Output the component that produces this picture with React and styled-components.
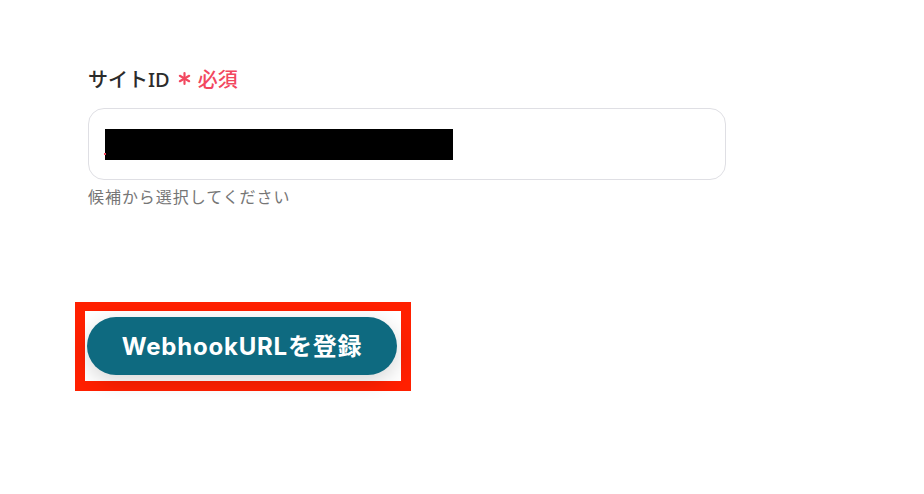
import React from 'react'
import styled, { createGlobalStyle } from 'styled-components'

const GlobalStyle = createGlobalStyle`
  body {
    margin: 0;
    background: #fff;
    font-family: 'Noto Sans', 'Noto Sans CJK JP', sans-serif;
  }
`

const Page = styled.div`
  padding: 62px 0 0 88px;
  height: 494px;
  box-sizing: border-box;
`

const Label = styled.div`
  display: flex;
  align-items: center;
  height: 32px;
  font-size: 20px;
  font-weight: 500;
  color: #2b2b2b;
`

const Required = styled.span`
  display: flex;
  align-items: center;
  gap: 7px;
  margin-left: 8px;
  color: #f2485f;
  font-size: 20px;
  font-weight: 500;
`

const Star = () => (
  <svg width='13' height='13' viewBox='0 0 12 12'>
    <g stroke='#f2485f' strokeWidth='2' strokeLinecap='round'>
      <line x1='6' y1='1' x2='6' y2='11' />
      <line x1='1.7' y1='3.5' x2='10.3' y2='8.5' />
      <line x1='1.7' y1='8.5' x2='10.3' y2='3.5' />
    </g>
  </svg>
)

const Field = styled.div`
  margin-top: 14px;
  width: 638px;
  height: 72px;
  box-sizing: border-box;
  border: 1px solid #dfdfe4;
  border-radius: 16px;
  padding: 20px 0 0 16px;
  position: relative;
`

const Masked = styled.div`
  width: 348px;
  height: 31px;
  background: #000;
`

const Caret = styled.span`
  position: absolute;
  left: 15px;
  top: 44px;
  width: 2px;
  height: 2px;
  background: #f2485f;
`

const Helper = styled.div`
  margin-top: 6px;
  font-size: 16px;
  line-height: 22px;
  letter-spacing: 0.95px;
  color: #767676;
`

const Frame = styled.div`
  display: inline-flex;
  margin: 94px 0 0 -13px;
  border: 10px solid #ff2000;
  border-top-width: 9px;
  padding: 6px 4px 6px 2px;
`

const Button = styled.button`
  width: 310px;
  height: 58px;
  padding: 0 0 3px;
  border: none;
  border-radius: 29px;
  background: #0e6a80;
  color: #fff;
  font-family: Inter, 'Noto Sans CJK JP', sans-serif;
  font-size: 24px;
  font-weight: 700;
  letter-spacing: 0.8px;
  cursor: pointer;
  box-shadow: 0 6px 20px rgba(0, 0, 0, 0.16);
`

const App = () => {
  return (
    <Page>
      <GlobalStyle />
      <Label>
        サイトID
        <Required>
          <Star />
          必須
        </Required>
      </Label>
      <Field>
        <Caret />
        <Masked />
      </Field>
      <Helper>候補から選択してください</Helper>
      <Frame>
        <Button type='button'>WebhookURLを登録</Button>
      </Frame>
    </Page>
  )
}

export default App
